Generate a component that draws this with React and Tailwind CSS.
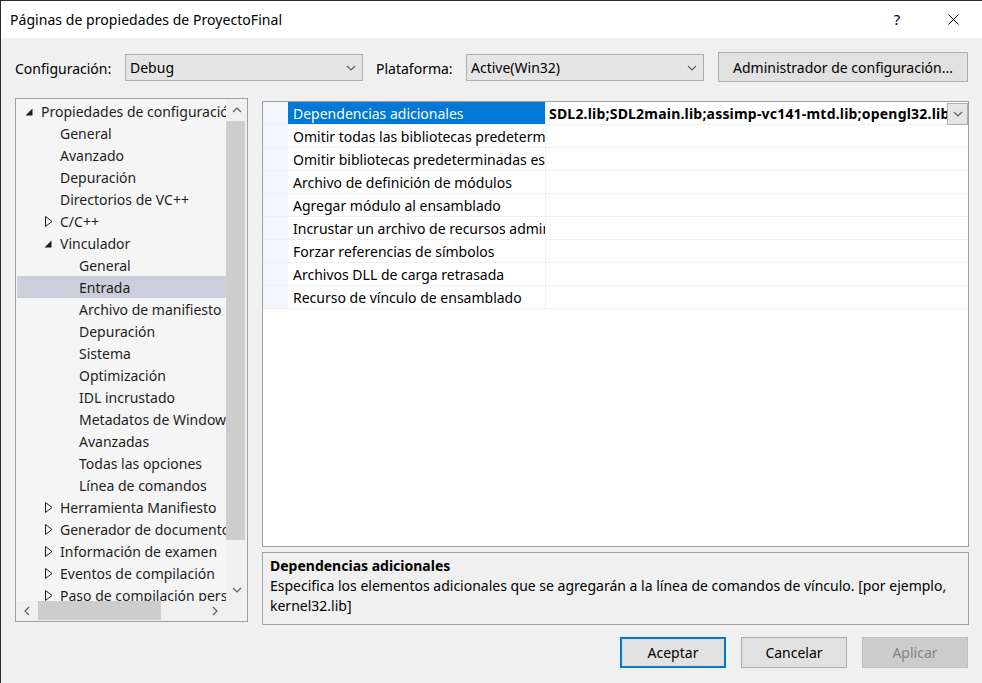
import React from "react";

const treeItems = [
  { t: "Propiedades de configuración", l: 0, e: "open" },
  { t: "General", l: 1 },
  { t: "Avanzado", l: 1 },
  { t: "Depuración", l: 1 },
  { t: "Directorios de VC++", l: 1 },
  { t: "C/C++", l: 1, e: "closed" },
  { t: "Vinculador", l: 1, e: "open" },
  { t: "General", l: 2 },
  { t: "Entrada", l: 2, sel: true },
  { t: "Archivo de manifiesto", l: 2 },
  { t: "Depuración", l: 2 },
  { t: "Sistema", l: 2 },
  { t: "Optimización", l: 2 },
  { t: "IDL incrustado", l: 2 },
  { t: "Metadatos de Windows", l: 2 },
  { t: "Avanzadas", l: 2 },
  { t: "Todas las opciones", l: 2 },
  { t: "Línea de comandos", l: 2 },
  { t: "Herramienta Manifiesto", l: 1, e: "closed" },
  { t: "Generador de documentos XML", l: 1, e: "closed" },
  { t: "Información de examen", l: 1, e: "closed" },
  { t: "Eventos de compilación", l: 1, e: "closed" },
  { t: "Paso de compilación personalizada", l: 1, e: "closed" },
];

const props = [
  "Dependencias adicionales",
  "Omitir todas las bibliotecas predeterminadas",
  "Omitir bibliotecas predeterminadas específicas",
  "Archivo de definición de módulos",
  "Agregar módulo al ensamblado",
  "Incrustar un archivo de recursos administrados",
  "Forzar referencias de símbolos",
  "Archivos DLL de carga retrasada",
  "Recurso de vínculo de ensamblado",
];

const levelPad = ["pl-[9px]", "pl-[28px]", "pl-[47px]"];

function Chevron({ dir = "down", color = "#606060" }) {
  const d =
    dir === "down"
      ? "M1 1 L5 5 L9 1"
      : dir === "up"
      ? "M1 5 L5 1 L9 5"
      : dir === "left"
      ? "M5 1 L1 5 L5 9"
      : "M1 1 L5 5 L1 9";
  const w = dir === "left" || dir === "right" ? 6 : 10;
  const h = dir === "left" || dir === "right" ? 10 : 6;
  return (
    <svg width={w} height={h} viewBox={`0 0 ${w} ${h}`} fill="none">
      <path d={d} stroke={color} strokeWidth="1.2" />
    </svg>
  );
}

function Expander({ e }) {
  if (e === "open")
    return (
      <svg width="8" height="8" viewBox="0 0 8 8" className="mt-[1px]">
        <polygon points="7.5,0.5 7.5,7.5 0.5,7.5" fill="#1e1e1e" />
      </svg>
    );
  if (e === "closed")
    return (
      <svg width="8" height="11" viewBox="0 0 8 11" className="ml-[1px]">
        <polygon points="0.5,0.5 7,5.5 0.5,10.5" fill="none" stroke="#1e1e1e" strokeWidth="1" />
      </svg>
    );
  return null;
}

function Dropdown({ value }) {
  return (
    <div className="mt-[2px] w-[238px] h-[27px] bg-[#e5e5e5] border border-[#adadad] flex items-center justify-between pl-[4px] pr-[6px]">
      <span>{value}</span>
      <Chevron />
    </div>
  );
}

export default function App() {
  return (
    <div className="w-[982px] h-[683px] overflow-hidden bg-[#f0f0f0] border-t border-l border-[#2b2b2b] flex flex-col font-['Noto_Sans',sans-serif] text-[14px] text-black">
      {/* title bar */}
      <div className="h-[37px] bg-white flex items-center pl-[9px] shrink-0">
        <span className="flex-1 tracking-[0.05px]">Páginas de propiedades de ProyectoFinal</span>
        <span className="w-[20px] text-center mr-[41px] text-[15px]">?</span>
        <svg width="11" height="11" viewBox="0 0 11 11" className="mr-[23px]">
          <path d="M0.5 0.5 L10.5 10.5 M10.5 0.5 L0.5 10.5" stroke="#000" strokeWidth="1" />
        </svg>
      </div>

      {/* toolbar */}
      <div className="mt-[14px] h-[30px] flex items-start pl-[14px] shrink-0">
        <span className="w-[110px] mt-[6px]">Configuración:</span>
        <Dropdown value="Debug" />
        <span className="ml-[13px] w-[90px] mt-[6px]">Plataforma:</span>
        <Dropdown value="Active(Win32)" />
        <div className="ml-[14px] w-[250px] h-[30px] bg-[#e1e1e1] border border-[#adadad] flex items-center justify-center">
          Administrador de configuración...
        </div>
      </div>

      {/* main */}
      <div className="mt-[16px] ml-[14px] w-[954px] flex flex-col">
        <div className="flex gap-[14px]">
          {/* tree */}
          <div className="w-[233px] h-[524px] border border-[#a0a0a0] flex flex-col bg-[#f5f5f5]">
            <div className="flex h-[502px]">
              <div className="w-[210px] overflow-hidden pt-[1px] text-[#1e1e1e]">
                {treeItems.map((it, i) => (
                  <div
                    key={i}
                    className={`h-[22px] flex items-center whitespace-nowrap ${levelPad[it.l]} ${it.sel ? "bg-[#cccedb] ml-[1px]" : ""}`}
                  >
                    <span className={`w-[16px] shrink-0 flex items-center ${it.sel ? "-ml-[1px]" : ""}`}>
                      <Expander e={it.e} />
                    </span>
                    <span>{it.t}</span>
                  </div>
                ))}
              </div>
              <div className="w-[21px] bg-[#f0f0f0] flex flex-col">
                <div className="h-[22px] flex items-center justify-center">
                  <Chevron dir="up" />
                </div>
                <div className="h-[419px] w-[19px] bg-[#cdcdcd]" />
                <div className="flex-1" />
                <div className="h-[22px] flex items-center justify-center">
                  <Chevron dir="down" />
                </div>
              </div>
            </div>
            <div className="flex h-[20px] bg-[#f0f0f0]">
              <div className="w-[22px] flex items-center justify-center">
                <Chevron dir="left" />
              </div>
              <div className="w-[123px] h-[19px] bg-[#cdcdcd]" />
              <div className="flex-1" />
              <div className="w-[22px] flex items-center justify-center">
                <Chevron dir="right" />
              </div>
              <div className="w-[21px]" />
            </div>
          </div>

          {/* right column */}
          <div className="w-[707px] mt-[3px] flex flex-col">
            <div className="h-[446px] border border-[#a0a0a0] bg-white flex flex-col">
              {props.map((p, i) => (
                <div key={i} className="h-[23px] flex border-b border-[#f0f0f0]">
                  <div className="w-[25px] bg-[#f3f6fb]" />
                  <div
                    className={`w-[258px] h-[22px] pl-[5px] flex items-center whitespace-nowrap overflow-hidden border-r border-[#f0f0f0] ${i === 0 ? "bg-[#0078d7] text-white" : ""}`}
                  >
                    {p}
                  </div>
                  <div className="flex-1 flex h-[22px] min-w-0">
                    {i === 0 && (
                      <>
                        <div className="flex-1 min-w-0 overflow-hidden whitespace-nowrap font-bold tracking-[0.2px] pl-[3px] flex items-center">
                          SDL2.lib;SDL2main.lib;assimp-vc141-mtd.lib;opengl32.lib;%(AdditionalDependencies)
                        </div>
                        <div className="w-[21px] h-[22px] mt-[1px] bg-[#e5e5e5] border border-[#adadad] flex items-center justify-center">
                          <Chevron />
                        </div>
                      </>
                    )}
                  </div>
                </div>
              ))}
            </div>
            <div className="mt-[5px] h-[73px] border border-[#a0a0a0] bg-[#f0f0f0] pl-[7px] pt-[3px] leading-[20px]">
              <div className="font-bold">Dependencias adicionales</div>
              <div className="whitespace-nowrap">
                Especifica los elementos adicionales que se agregarán a la línea de comandos de vínculo. [por ejemplo,
                <br />
                kernel32.lib]
              </div>
            </div>
          </div>
        </div>

        {/* buttons */}
        <div className="mt-[12px] mr-[1px] flex justify-end gap-[15px]">
          <div className="w-[106px] h-[31px] bg-[#e1e1e1] border-2 border-[#0078d7] flex items-center justify-center">
            Aceptar
          </div>
          <div className="w-[106px] h-[31px] bg-[#e1e1e1] border border-[#adadad] flex items-center justify-center">
            Cancelar
          </div>
          <div className="w-[106px] h-[31px] bg-[#cccccc] border border-[#bfbfbf] text-[#838383] flex items-center justify-center">
            Aplicar
          </div>
        </div>
      </div>
    </div>
  );
}
